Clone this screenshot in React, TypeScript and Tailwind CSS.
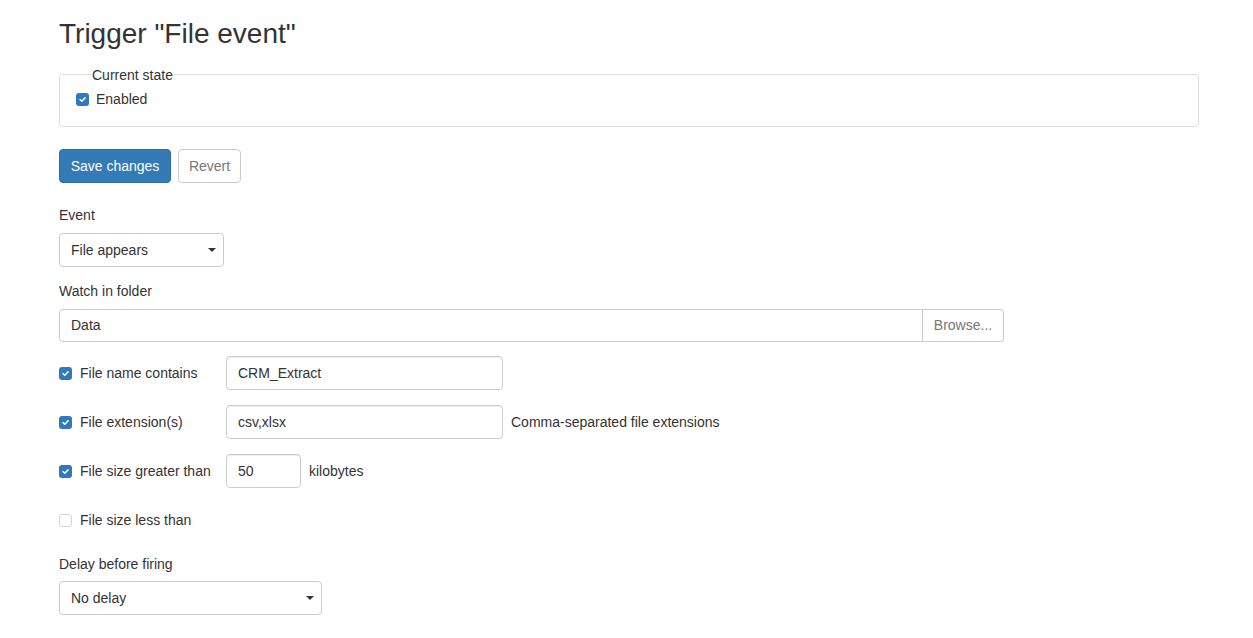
import { useState } from "react";

// Small Bootstrap-ish checkbox drawn with a span so the colours stay fixed
const Check = ({ checked }: { checked: boolean }) => (
    <span
        className={
            "inline-flex h-[13px] w-[13px] shrink-0 items-center justify-center rounded-[3px] " +
            (checked ? "bg-[#3079bd]" : "border border-[#d5d5d5] bg-white")
        }
    >
        {checked && (
            <svg width="9" height="9" viewBox="0 0 10 10">
                <path d="M2.3 5.2 L4.2 7 L7.8 3.2" fill="none" stroke="white" strokeWidth="1.7" strokeLinecap="round" strokeLinejoin="round" />
            </svg>
        )}
    </span>
);

const Caret = () => (
    <span className="h-0 w-0 border-x-[4px] border-t-[4px] border-x-transparent border-t-[#333]" />
);

const Select = ({ value, width }: { value: string; width: string }) => (
    <div
        className={
            "flex h-[34px] items-center justify-between rounded-[4px] border border-[#ccc] bg-white pb-[1px] pl-[11px] pr-[7px] " +
            width
        }
    >
        <span>{value}</span>
        <Caret />
    </div>
);

const TextBox = ({ value, width }: { value: string; width: string }) => (
    <div
        className={
            "flex h-[34px] items-center rounded-[4px] border border-[#ccc] bg-white px-[11px] pb-[1px] shadow-[inset_0_1px_1px_rgba(0,0,0,0.075)] " +
            width
        }
    >
        {value}
    </div>
);

// One row of the filter conditions: checkbox + label, then its inputs
const FilterRow = ({
    checked,
    label,
    children,
}: {
    checked: boolean;
    label: string;
    children?: React.ReactNode;
}) => (
    <div className="flex h-[34px] items-center">
        <div className="flex w-[167px] items-center gap-[8px]">
            <Check checked={checked} />
            <span>{label}</span>
        </div>
        {children}
    </div>
);

export default function App() {
    const [enabled] = useState(true);

    return (
        <div
            className="min-h-screen bg-white text-[14px] leading-[20px] text-[#333]"
            style={{ fontFamily: '"Liberation Sans", Arial, sans-serif' }}
        >
            <div className="ml-[59px] w-[1140px] pt-[16px]">
                <h1 className="text-[28px] leading-[36px] font-normal">Trigger "File event"</h1>

                {/* Current state */}
                <fieldset className="mt-[13px] h-[62px] rounded-[4px] border border-[#ddd] px-[16px] pb-[10px]">
                    <legend className="ml-[15px] px-[1px] pt-[1px] leading-[18px]">Current state</legend>
                    <div className="mt-[5px] flex items-center gap-[7px]">
                        <Check checked={enabled} />
                        <span>Enabled</span>
                    </div>
                </fieldset>

                <div className="mt-[22px] flex gap-[7px]">
                    <button className="h-[34px] w-[112px] rounded-[4px] border border-[#2e6da4] bg-[#337ab7] pb-[1px] text-white">
                        Save changes
                    </button>
                    <button className="h-[34px] w-[63px] rounded-[4px] border border-[#ccc] bg-white pb-[1px] text-[#777]">
                        Revert
                    </button>
                </div>

                <div className="mt-[22px]">Event</div>
                <div className="mt-[8px]">
                    <Select value="File appears" width="w-[165px]" />
                </div>

                <div className="mt-[14px]">Watch in folder</div>
                <div className="mt-[8px] flex w-[945px]">
                    <div className="flex h-[33px] flex-1 items-center rounded-l-[4px] border border-[#ccc] px-[11px] pb-[1px]">
                        Data
                    </div>
                    <div className="flex h-[33px] w-[81px] items-center justify-center rounded-r-[4px] border border-l-0 border-[#ccc] pb-[1px] text-[#777]">
                        Browse...
                    </div>
                </div>

                <div className="mt-[14px] flex flex-col gap-[15px]">
                    <FilterRow checked label="File name contains">
                        <TextBox value="CRM_Extract" width="w-[277px]" />
                    </FilterRow>
                    <FilterRow checked label="File extension(s)">
                        <TextBox value="csv,xlsx" width="w-[277px]" />
                        <span className="ml-[8px]">Comma-separated file extensions</span>
                    </FilterRow>
                    <FilterRow checked label="File size greater than">
                        <TextBox value="50" width="w-[75px]" />
                        <span className="ml-[8px]">kilobytes</span>
                    </FilterRow>
                    <FilterRow checked={false} label="File size less than" />
                </div>

                <div className="mt-[17px]">Delay before firing</div>
                <div className="mt-[7px]">
                    <Select value="No delay" width="w-[263px]" />
                </div>
            </div>
        </div>
    );
}
